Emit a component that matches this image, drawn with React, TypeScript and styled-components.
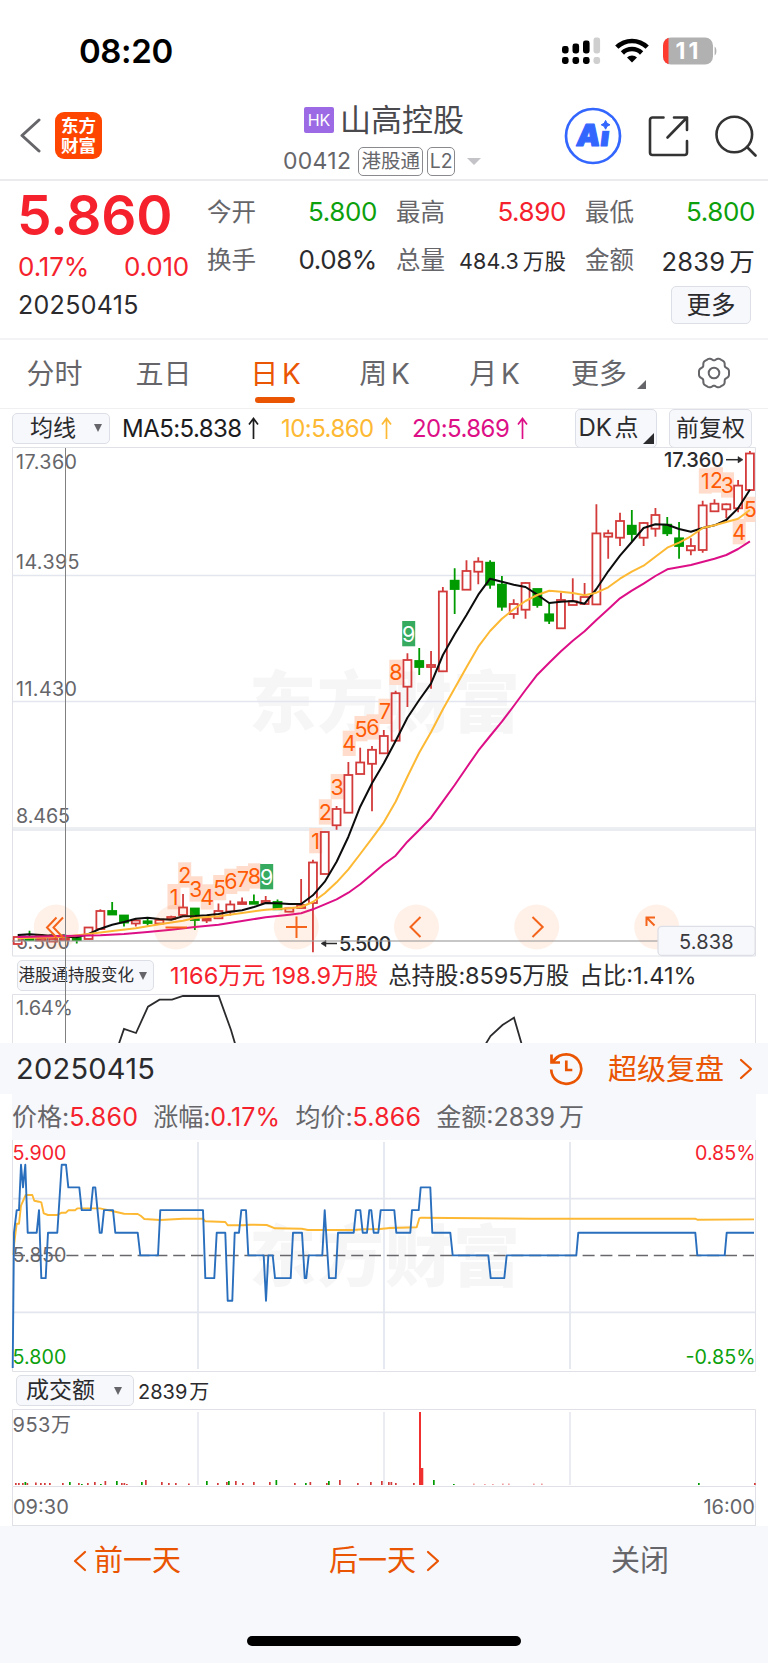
import React from 'react';
import styled, { createGlobalStyle } from 'styled-components';

const ORANGE = '#ea5504';
const RED = '#f5222d';
const GREEN = '#0ca00c';
const UP = '#d33a3a';
const DOWN = '#009b00';
const PANEL = '#f7f8fb';
const GRID = '#e3e6ee';
const FRAME = '#dfe1e6';

const GlobalStyle = createGlobalStyle`
  * { box-sizing: border-box; }
  body { margin: 0; background: #fff; }
  svg { display: block; flex: none; }
  svg text { font-family: Inter, "Noto Sans CJK SC", sans-serif; }
`;

const Screen = styled.div`
  width: 768px;
  height: 1663px;
  display: flex;
  flex-direction: column;
  overflow: hidden;
  background: #fff;
  color: #2b2b2e;
  font-family: Inter, "Noto Sans CJK SC", sans-serif;
  white-space: nowrap;
`;

const Text = styled.span<{ $size: number; $color?: string; $weight?: number; $track?: number; $lift?: number }>`
  font-size: ${p => p.$size}px;
  color: ${p => p.$color ?? 'inherit'};
  font-weight: ${p => p.$weight ?? 400};
  letter-spacing: ${p => p.$track ?? 0}px;
  padding-bottom: ${p => p.$lift ?? 0}px;
`;
const Unit = styled.span<{ $gap?: number }>`
  margin-left: ${p => p.$gap ?? 4}px;
`;

/* Status bar */
const StatusBar = styled.div`
  height: 98px;
  padding: 4px 50px 0 79px;
  display: flex;
  align-items: center;
  justify-content: space-between;
`;
const StatusIcons = styled.div`
  display: flex;
  align-items: center;
  gap: 14px;
`;

/* Title bar */
const TitleBar = styled.header`
  height: 83px;
  padding: 0 11px 0 20px;
  display: flex;
  align-items: flex-start;
  border-bottom: 2px solid #ebebed;
`;
const BackArea = styled.div`
  width: 263px;
  padding-top: 14px;
  display: flex;
  align-items: center;
  gap: 14px;
`;
const AppLogo = styled.div`
  width: 47px;
  height: 47px;
  border-radius: 9px;
  background: #ff4600;
  color: #fff;
  display: grid;
  align-content: center;
  justify-content: center;
  font-size: 17.5px;
  line-height: 20px;
  font-weight: 700;
`;
const TitleArea = styled.div`
  width: 281px;
  display: flex;
  flex-direction: column;
`;
const TitleLine = styled.div`
  display: flex;
  align-items: center;
  height: 38px;
  margin-top: 3px;
  padding-left: 21px;
  gap: 6px;
`;
const CodeLine = styled.div`
  display: flex;
  align-items: center;
  height: 30px;
  margin-top: 7px;
`;
const MarketBadge = styled.span`
  width: 30px;
  height: 26px;
  border-radius: 2px;
  background: #9b6ae4;
  color: #fff;
  font-size: 16px;
  line-height: 27px;
  text-align: center;
`;
const Outlined = styled.span<{ $w: number; $gap: number }>`
  width: ${p => p.$w}px;
  height: 29px;
  margin-left: ${p => p.$gap}px;
  border: 1.5px solid #8a8a8e;
  border-radius: 5px;
  color: #66666a;
  font-size: 19.5px;
  line-height: 26px;
  display: flex;
  justify-content: center;
`;
const Caret = styled.i<{ $w: number; $h: number; $color: string; $ml?: number }>`
  width: 0;
  height: 0;
  margin-left: ${p => p.$ml ?? 0}px;
  border-left: ${p => p.$w / 2}px solid transparent;
  border-right: ${p => p.$w / 2}px solid transparent;
  border-top: ${p => p.$h}px solid ${p => p.$color};
`;
const Corner = styled.i<{ $s: number; $color: string }>`
  width: 0;
  height: 0;
  border-left: ${p => p.$s}px solid transparent;
  border-bottom: ${p => p.$s}px solid ${p => p.$color};
`;
const Tools = styled.div`
  display: flex;
  align-items: center;
  gap: 26px;
  padding-top: 9px;
`;

/* Quote panel */
const Quote = styled.section`
  height: 159px;
  padding-left: 18px;
  border-bottom: 2px solid #f3f3f5;
`;
const QuoteTop = styled.div`
  height: 102px;
  display: flex;
`;
const PriceBlock = styled.div`
  width: 189px;
`;
const Price = styled.div`
  height: 68px;
  margin-left: -1px;
  line-height: 69px;
  color: ${RED};
  font-size: 55px;
  font-weight: 600;
  letter-spacing: -0.1px;
`;
const Change = styled.div`
  height: 34px;
  width: 171px;
  display: flex;
  align-items: center;
  justify-content: space-between;
`;
const Metrics = styled.div`
  display: grid;
  grid-template-columns: repeat(3, 170px);
  grid-template-rows: 47.5px 47.5px;
  column-gap: 19px;
  padding-top: 7px;
`;
const Metric = styled.div`
  display: flex;
  align-items: center;
  justify-content: space-between;
`;
const QuoteFoot = styled.div`
  height: 46px;
  display: flex;
  align-items: center;
  justify-content: space-between;
  padding: 0 17px 2px 0;
`;

const Chip = styled.button<{ $w: number; $h: number; $size: number; $gap?: number; $left?: number }>`
  width: ${p => p.$w}px;
  height: ${p => p.$h}px;
  flex: none;
  padding: 0 0 0 ${p => p.$left ?? 0}px;
  border: 1.5px solid #dddfe6;
  border-radius: 5px;
  background: ${PANEL};
  color: #2b2b2e;
  font-family: inherit;
  font-size: ${p => p.$size}px;
  line-height: 1;
  display: flex;
  align-items: center;
  justify-content: ${p => (p.$left ? 'flex-start' : 'center')};
  gap: ${p => p.$gap ?? 0}px;
  word-spacing: -4px;
`;

/* Period tabs */
const Tabs = styled.nav`
  height: 69px;
  display: flex;
  border-bottom: 1px solid #f0f0f2;
`;
const Tab = styled.div<{ $w: number; $active?: boolean }>`
  width: ${p => p.$w}px;
  display: flex;
  flex-direction: column;
  align-items: center;
  padding-top: 14px;
  color: ${p => (p.$active ? ORANGE : '#66666a')};
  font-size: 28px;
  line-height: 40px;
  word-spacing: -4px;
  &::after {
    content: '';
    width: 40px;
    height: 6px;
    margin: 3px 2px 0 0;
    border-radius: 3px;
    background: ${p => (p.$active ? ORANGE : 'transparent')};
  }
`;
const TabMore = styled.div`
  width: 118px;
  padding: 14px 0 0 18px;
  display: flex;
  align-items: flex-start;
  gap: 10px;
  color: #66666a;
  font-size: 28px;
  line-height: 40px;
  i { margin-top: 26px; }
`;
const GearBox = styled.div`
  padding: 16px 0 0 26px;
`;

/* Indicator legend */
const Legend = styled.div`
  height: 38px;
  padding: 0 16px 0 12px;
  display: flex;
  align-items: center;
`;
const LegendItem = styled.span<{ $color: string; $ml: number; $w: number }>`
  margin-left: ${p => p.$ml}px;
  width: ${p => p.$w}px;
  color: ${p => p.$color};
  font-size: 24px;
  letter-spacing: -0.55px;
  display: flex;
  align-items: center;
  justify-content: space-between;
`;
const Push = styled.div`
  margin-left: auto;
  display: flex;
  gap: 12px;
  i { margin: 20px 0 0 4px; }
`;

/* Chart blocks */
const ChartStack = styled.div`
  position: relative;
  height: 596px;
`;
const CrossLine = styled.div`
  position: absolute;
  left: 65px;
  top: 1px;
  bottom: 0;
  width: 1px;
  background: #808080;
`;
const HoldRow = styled.div`
  height: 37px;
  padding-left: 17px;
  display: flex;
  align-items: center;
`;
const HoldFigures = styled.div`
  display: flex;
  gap: 10px;
  padding: 0 0 3px 16px;
`;

/* Replay panel */
const ReplayHead = styled.div`
  height: 51px;
  background: ${PANEL};
  padding: 0 15px 0 16px;
  display: flex;
  align-items: center;
`;
const ReplayLink = styled.div`
  margin-left: auto;
  display: flex;
  align-items: center;
  gap: 15px;
  color: ${ORANGE};
`;
const Summary = styled.div`
  height: 46px;
  margin: 0 12px;
  padding-bottom: 4px;
  background: ${PANEL};
  display: flex;
  align-items: center;
  gap: 15px;
  color: #66666a;
  font-size: 25px;
  b { font-weight: 400; color: ${RED}; letter-spacing: 0.2px; }
`;
const VolumeHead = styled.div`
  height: 36px;
  padding: 0 0 1px 16px;
  display: flex;
  align-items: center;
  gap: 4px;
`;
const TimeAxis = styled.div`
  height: 39px;
  margin: 0 12px;
  padding-top: 2px;
  border: 1px solid ${FRAME};
  border-top: 0;
  display: flex;
  align-items: center;
  justify-content: space-between;
  color: #66666a;
`;

/* Footer */
const Footer = styled.footer`
  height: 137px;
  background: ${PANEL};
  display: flex;
  flex-direction: column;
  align-items: center;
`;
const DayNav = styled.div`
  width: 100%;
  height: 110px;
  padding: 15px 0 0 73px;
  display: flex;
  align-items: flex-start;
  color: ${ORANGE};
  font-size: 29px;
  line-height: 40px;
`;
const NavItem = styled.div<{ $w: number; $gap: number; $color?: string }>`
  width: ${p => p.$w}px;
  display: flex;
  align-items: center;
  gap: ${p => p.$gap}px;
  color: ${p => p.$color ?? 'inherit'};
`;
const HomeBar = styled.div`
  width: 274px;
  height: 10px;
  border-radius: 5px;
  background: #000;
`;

/* high, body top, body bottom, low, 1 when the day closed up */
const candles: [number, number, number, number, 0 | 1][] = [
  [936.7, 937, 944, 944, 1], [930.7, 937.5, 940, 941, 0], [938, 938.5, 940.5, 941, 1], [938.5, 939, 941.5, 942, 1],
  [938, 938, 940, 940, 1], [937, 938, 940, 943.5, 0], [927, 927.5, 939, 939, 1], [909.3, 911, 929, 929, 1],
  [902, 911, 914.5, 915, 0], [915, 915.5, 922.5, 926.5, 0], [918.5, 920.5, 923.5, 926.5, 1], [918, 921.3, 923, 925.5, 0],
  [919.7, 920, 923.5, 923.5, 1], [915.7, 917, 919, 919, 1], [894, 907.5, 915, 915, 1], [908.5, 908.5, 920, 930, 0],
  [917, 918.7, 920.5, 923, 1], [903.5, 911, 918.3, 918.5, 1], [900.5, 904.5, 911.5, 915.5, 1], [897.5, 902.3, 904, 904, 1],
  [894.5, 902, 903.8, 904, 0], [896, 901, 903, 903, 1], [899.5, 902, 909.3, 910, 0], [907.8, 908.3, 911.7, 912, 1],
  [879, 905, 908, 908, 1], [859.7, 862.5, 903, 952.3, 1], [831.5, 832, 874, 874, 1], [806, 809, 825.3, 829.7, 1],
  [762, 775, 812.7, 813, 1], [747.7, 762.5, 774, 774, 1], [746, 749.8, 763.8, 811.3, 1], [730, 736, 753.3, 753.5, 1],
  [690.7, 693.2, 740.7, 741, 1], [653.3, 660, 686.7, 707, 1], [648, 661, 667, 675, 0], [651, 665, 667, 688.7, 1],
  [587, 591.5, 671.3, 671.5, 1], [568.3, 580.7, 589, 614, 0], [560.3, 571, 589.7, 590, 1], [557.3, 561.7, 571.7, 584.3, 1],
  [560.3, 562.7, 584.7, 588.7, 0], [576, 584.7, 606.7, 610.7, 0], [599.3, 604, 614, 618.7, 1], [582, 583, 609.7, 618.7, 1],
  [589, 589, 605, 607.7, 0], [602.3, 614.3, 620.7, 624, 0], [592.7, 600, 628.3, 628.5, 1], [578.3, 601.3, 605, 605, 1],
  [583, 597, 604, 604, 1], [504.3, 533.4, 604.4, 604.5, 1], [529.7, 533.3, 536.7, 558.7, 1], [512.7, 521, 537.7, 546, 1],
  [510, 525.7, 534, 541.3, 0], [522, 523, 537.7, 546, 1], [508, 515, 528.7, 536.7, 1], [517, 524.7, 533.3, 536, 0],
  [522, 538.3, 546, 558.7, 0], [538.3, 546, 550.3, 555.3, 1], [500.7, 505.4, 550, 552.7, 1], [499.3, 503.7, 511.3, 511.5, 1],
  [503.5, 504.3, 509.3, 518.3, 1], [480, 485.6, 508.3, 512.3, 1], [451, 453.5, 490, 490, 1],
];

const ma5 = [
  935, 934.3, 935, 936, 936.7, 937.3, 934, 928.7, 924.7, 922, 918.7, 917.7, 919, 919.7, 916.3, 916, 915.3, 914, 911.7,
  910.3, 907, 903, 903.3, 904, 904, 895.3, 881.7, 861.7, 836.7, 806.7, 783.3, 763.3, 741, 717.7, 700, 683.3, 655, 634.3,
  615, 594.7, 578.7, 581.7, 584.7, 587, 594.7, 603, 601.7, 601, 603.7, 589, 571.3, 555.7, 542, 528, 524.3, 524.7, 529,
  531.7, 528, 525.3, 520, 508.3, 489.7,
].map((y, i) => [i, y]);

const ma10 = [
  [0, 938.3], [4, 936.7], [6, 934], [8, 931], [10, 928.3], [12, 924.3], [14, 920.7], [15, 918], [17, 916.3], [19, 913],
  [21, 909.7], [23, 908.3], [24, 907], [25, 902], [26, 893.3], [27, 882.3], [28, 869.3], [29, 854], [30, 838.3],
  [31, 822.3], [32, 801.7], [33, 776.7], [34, 752.7], [35, 732], [36, 709.3], [37, 688.3], [38, 667.3], [39, 646.7],
  [40, 631], [41, 618.7], [42, 609.3], [43, 601], [44, 595], [45, 590.7], [46, 591.7], [47, 593], [48, 595.3],
  [49, 592.7], [50, 587.3], [51, 578.7], [52, 571.7], [53, 565.7], [54, 556.7], [55, 547.7], [56, 542.7], [57, 536.3],
  [58, 528], [59, 525.3], [60, 522], [61, 518.7], [62, 510],
];

const ma20 = [
  [0, 937], [4, 936], [7, 935.3], [9, 934], [11, 932], [13, 929.7], [15, 927], [17, 924.7], [19, 921], [21, 917.3],
  [23, 914.7], [24, 913.3], [25, 909.3], [26, 904.3], [27, 899.3], [28, 892.7], [29, 884.3], [30, 874.3], [31, 864.3],
  [32, 855.7], [33, 841.7], [34, 830], [35, 817.7], [36, 801.3], [37, 785], [38, 767.7], [39, 750.7], [40, 736],
  [41, 721.7], [42, 706], [43, 690], [44, 674.7], [45, 662.7], [46, 651.3], [47, 640.7], [48, 631.3], [49, 620],
  [50, 609.3], [51, 598.3], [52, 590.7], [53, 583.7], [54, 576], [55, 569.3], [57, 565], [59, 558.7], [60, 555],
  [61, 549], [62, 541.3],
];

/* countdown marks: digit, centre x, top y */
const marks: [number, number, number][] = [
  [1, 174, 884], [2, 184.7, 862.3], [3, 196, 876.3], [4, 207.2, 884.3], [5, 219.7, 875], [6, 230.8, 868.7],
  [7, 243, 866], [8, 254.5, 863.3], [9, 266.7, 864], [1, 315.7, 828], [2, 325.3, 799.3], [3, 337.2, 774],
  [4, 349.2, 730.7], [5, 361, 716], [6, 373, 714.3], [7, 385, 698.7], [8, 395.8, 659.7], [9, 408.7, 621],
  [1, 705.3, 468.3], [2, 716.5, 467.3], [3, 727.5, 472.3], [4, 739.2, 519], [5, 750.3, 496.7],
];

const cx = (i: number) => 17.7 + i * 11.81;
const line = (pts: number[][]) => pts.map(([i, y]) => `${cx(i).toFixed(1)},${y}`).join(' ');

/* time slot (three per pixel) and traded price in cents */
const ticks: [number, number][] = [
  [38, 580], [42, 586], [50, 587], [57, 587], [63, 589], [69, 588], [76, 589], [83, 586], [110, 586], [117, 587],
  [124, 584], [137, 584], [144, 586], [172, 586], [185, 589], [198, 589], [205, 588], [238, 588], [245, 587],
  [272, 587], [279, 588], [286, 588], [299, 586], [305, 586], [312, 587], [339, 587], [346, 586], [413, 586],
  [421, 585], [474, 585], [481, 587], [609, 587], [616, 584], [643, 584], [650, 586], [676, 586], [683, 583],
  [697, 583], [704, 586], [717, 586], [724, 587], [738, 587], [745, 585], [791, 585], [798, 583], [805, 585],
  [818, 585], [825, 584], [872, 584], [879, 586], [906, 586], [914, 584], [919, 584], [926, 585], [967, 585],
  [974, 587], [987, 584], [1007, 584], [1014, 586], [1061, 586], [1068, 587], [1081, 587], [1088, 586], [1101, 586],
  [1108, 587], [1114, 587], [1121, 586], [1135, 586], [1142, 587], [1183, 587], [1189, 586], [1231, 586],
  [1236, 587], [1256, 587], [1262, 588], [1291, 588], [1297, 586], [1351, 586], [1358, 585], [1465, 585],
  [1472, 584], [1513, 584], [1520, 585], [1729, 585], [1735, 586], [2086, 586], [2092, 585], [2174, 585],
  [2180, 586], [2262, 586],
];
const priceLine = ticks
  .map(([t, p]) => `${(t / 3).toFixed(1)},${p === 580 ? 1368 : (1255.4 - (p - 585) * 22.67).toFixed(1)}`)
  .join(' ');

const average: [number, number][] = [
  [13.5, 1255], [14, 1246], [15.5, 1233], [16.7, 1223.7], [19, 1223.7], [21, 1205.7], [25.7, 1195], [32.3, 1195],
  [34.3, 1200.7], [39, 1201.7], [41.3, 1202.3], [43.7, 1213.3], [48, 1215], [57.3, 1215], [61.7, 1212.7], [66, 1212.7],
  [68.3, 1210.3], [75, 1210.3], [77.3, 1208.4], [100, 1208.4], [108.3, 1210.3], [115.3, 1211.7], [124, 1213.7],
  [137.7, 1214], [141, 1216], [144.3, 1219], [160, 1220], [183, 1218.7], [203, 1218.7], [205.3, 1221.3],
  [225.3, 1222], [227.7, 1225.3], [243, 1225.3], [250, 1224.7], [266.7, 1225], [275, 1228.3], [301.7, 1228.7],
  [308, 1230], [353, 1230], [363, 1229.3], [380, 1229], [390, 1228], [416.7, 1227.3], [419.3, 1218.4], [421, 1217.7],
  [450, 1218], [533, 1218.7], [695, 1218.7], [697.3, 1219.7], [754, 1219.4],
];

/* small turnover bars: x, height, colour */
const volumes: [number, number, string][] = [
  [15, 2, UP], [18, 2, UP], [22, 2, UP], [24.5, 3, DOWN], [26.5, 2, UP], [35, 2.5, UP], [40, 2, UP], [44, 2, UP],
  [49, 2, UP], [62, 2, UP], [69, 3, DOWN], [78, 2, UP], [81, 1, DOWN], [87, 2, UP], [94, 3, UP], [100, 1, DOWN],
  [104.5, 4, UP], [116, 4, DOWN], [121, 2, UP], [123.5, 2, UP], [126, 1, UP], [141, 3, DOWN], [145, 5, UP],
  [161, 3, UP], [168, 2, UP], [175, 2, UP], [188, 1.5, UP], [206, 4, DOWN], [217, 2, UP], [226, 3, UP], [228, 4, DOWN],
  [235, 4, UP], [242, 2, UP], [253, 3, UP], [269, 3, UP], [275.5, 5, DOWN], [294, 2, UP], [305, 2, DOWN], [309.5, 3, UP],
  [326, 2, UP], [328, 4, DOWN], [339, 5, UP], [357, 2, UP], [370, 3, UP], [381, 4, UP], [388, 3, UP], [390.5, 3, UP],
  [395, 2, UP], [413, 2, UP], [433, 5, DOWN], [453, 1, DOWN], [473, 1.5, '#f0a0a0'], [484, 1, '#f0a0a0'],
  [492, 1, '#f0a0a0'], [502, 1.5, '#f0a0a0'], [508, 1.5, '#f0a0a0'], [533, 1.5, '#f0a0a0'], [541, 1.5, '#f0a0a0'],
  [698, 2, DOWN], [754, 2, UP],
];

/* six broad lobes with narrow notches between them */
const gearPath =
  Array.from({ length: 120 }, (_, k) => {
    const a = (k * Math.PI) / 60;
    const r = 14.3 + 1.15 * Math.cos(6 * a) - 0.45 * Math.cos(12 * a);
    return `${k ? 'L' : 'M'}${(17 + r * Math.cos(a)).toFixed(2)} ${(17 + r * Math.sin(a)).toFixed(2)}`;
  }).join('') + 'Z';

const SignalIcon = () => (
  <svg width="39" height="28" viewBox="0 0 39 28">
    {[0, 1, 2, 3].map(i => (
      <g key={i} fill={i === 3 ? '#cfcfcf' : '#000'}>
        <rect x={i * 10.5} y={[9, 6.5, 3.5, 0.5][i]} width="6.6" height={[7.5, 10, 13, 16][i]} rx="2.4" />
        <rect x={i * 10.5} y="20" width="6.6" height="7" rx="2.4" />
      </g>
    ))}
  </svg>
);

const WifiIcon = () => (
  <svg width="34" height="26" viewBox="0 0 34 26" fill="none" stroke="#000" strokeWidth="4.6">
    <path d="M1.8 9.2a21.6 21.6 0 0 1 30.4 0" />
    <path d="M7.4 15a13.6 13.6 0 0 1 19.2 0" />
    <path d="M17 24.6l-5-5a7 7 0 0 1 10 0z" fill="#000" stroke="none" />
  </svg>
);

const BatteryIcon = () => (
  <svg width="55" height="28" viewBox="0 0 55 28">
    <defs>
      <clipPath id="cell"><rect x="0" y="0.5" width="50" height="27" rx="8" /></clipPath>
    </defs>
    <g clipPath="url(#cell)">
      <rect width="50" height="28" fill="#b1b1b1" />
      <rect width="5.5" height="28" fill="#ff3b30" />
    </g>
    <path d="M51.6 9.5c2.4 1 2.4 8 0 9z" fill="#b1b1b1" />
    <text x="24" y="22.3" fontSize="23" fontWeight="700" fill="#fff" textAnchor="middle" textLength="23">11</text>
  </svg>
);

const AiIcon = () => (
  <svg width="58" height="58" viewBox="0 0 58 58">
    <circle cx="29" cy="29" r="27" fill="none" stroke="#3366ff" strokeWidth="2.7" />
    <text transform="translate(11.5 39) skewX(-7)" fontSize="30" fontWeight="900" fill="#3366ff" stroke="#3366ff" strokeWidth="1.2" strokeLinejoin="round" textLength="33">Ai</text>
    <rect x="34" y="11" width="14" height="12.8" fill="#fff" />
    <path d="M41.6 13.4l1.5 2.9 2.9 1.5-2.9 1.5-1.5 2.9-1.5-2.9-2.9-1.5 2.9-1.5z" fill="#3366ff" stroke="#3366ff" />
  </svg>
);

const ShareIcon = () => (
  <svg width="41" height="42" viewBox="0 0 41 42" fill="none" stroke="#333" strokeWidth="2.6" strokeLinecap="round" strokeLinejoin="round">
    <path d="M15.5 2.5H4.5A2.5 2.5 0 0 0 2 5v32.5A2.5 2.5 0 0 0 4.5 40h32a2.5 2.5 0 0 0 2.5-2.5V26" />
    <path d="M26 2.5h13V15M39 2.5L19.500 22.500" />
  </svg>
);

const SearchIcon = () => (
  <svg width="42" height="42" viewBox="0 0 42 42" fill="none" stroke="#333" strokeWidth="2.6" strokeLinecap="round">
    <circle cx="19.3" cy="19.5" r="17.8" />
    <path d="M32 32l8.5 8.5" />
  </svg>
);

const HistoryIcon = () => (
  <svg width="34" height="34" viewBox="0 0 34 34" fill="none" stroke={ORANGE} strokeWidth="2.7">
    <path d="M2.2 17.5A15 14.7 0 1 0 5.2 8.3" />
    <path d="M2.5 2.5v8H11M3 10l6-5.5" />
    <path d="M17.3 8.500V18h6" />
  </svg>
);

type ChevronProps = { w: number; h: number; left?: boolean; sw?: number; color?: string };
const Chevron = ({ w, h, left, sw = 2.2, color = ORANGE }: ChevronProps) => (
  <svg width={w} height={h} viewBox={`0 0 ${w} ${h}`} fill="none" stroke={color} strokeWidth={sw} strokeLinecap="round" strokeLinejoin="round">
    <polyline points={left ? `${w - 2},2 2,${h / 2} ${w - 2},${h - 2}` : `2,2 ${w - 2},${h / 2} 2,${h - 2}`} />
  </svg>
);

const UpArrow = () => (
  <svg width="11" height="23" viewBox="0 0 11 23" fill="none" stroke="currentColor" strokeWidth="1.7">
    <path d="M5.5 22V1.500M1 7.500L5.500 1.500 10 7.500" />
  </svg>
);

const Watermark = ({ y }: { y: number }) => (
  <text x="249" y={y} fontSize="67" fontWeight="900" fill="#f6f6f7" textLength="271">
    东方财富
  </text>
);

const KLineChart = () => (
  <svg width="768" height="510" viewBox="0 447 768 510">
    <Watermark y={727} />
    <g stroke={GRID} strokeWidth="1.5">
      <path d="M12 575.500H755M12 701.500H755" />
      <path d="M12 828H755" stroke="#eceff2" strokeWidth="2" />
      <path d="M12 830H755" />
    </g>
    <path d="M12.500 956V447.500H755.500V956Z" fill="none" stroke={FRAME} />
    <g fill="#66666a" fontSize="19.7">
      <text x="16" y="469" textLength="61">17.360</text>
      <text x="16" y="568.5" textLength="63.5">14.395</text>
      <text x="16" y="695.5" textLength="61">11.430</text>
      <text x="16" y="822.5" textLength="54">8.465</text>
      <text x="16" y="948.5" textLength="54">5.500</text>
    </g>
    {marks.map(([n, x, y], k) => (
      <g key={k}>
        <rect x={x - 6.5} y={y} width={k === 22 ? 11.5 : 13} height="25.3" fill={n === 9 ? '#36ab60' : '#ffdccb'} />
        <text x={x} y={y + 20.5} fontSize="21.5" textAnchor="middle" fill={n === 9 ? '#fff' : '#ff5a05'}>{n}</text>
      </g>
    ))}
    {candles.map(([hi, top, bottom, lo, up], i) => (
      <g key={i} stroke={up ? UP : DOWN} strokeWidth="1.8" fill={up ? 'none' : DOWN}>
        <path d={`M${cx(i)} ${hi}V${top}M${cx(i)} ${bottom}V${lo}`} />
        <rect x={cx(i) - 4} y={top} width="8" height={bottom - top} />
      </g>
    ))}
    <g fill="none" strokeWidth="2" strokeLinejoin="round">
      <polyline points={line(ma5)} stroke="#0c0c0c" />
      <polyline points={line(ma10)} stroke="#fdb933" />
      <polyline points={line(ma20)} stroke="#dd0f87" />
    </g>
    <g fontSize="20" fontWeight="500" fill="#2b2b2e">
      <text x="664" y="467" textLength="60">17.360</text>
      <text x="339" y="951" textLength="52.5">5.500</text>
    </g>
    <g stroke="#2b2b2e" strokeWidth="1.5" fill="#2b2b2e">
      <path d="M726 459.700H739" />
      <path d="M738 456.500l5 3.200-5 3.200z" strokeWidth="0.5" />
      <path d="M337 943.500H325" />
      <path d="M326 940.300l-5 3.200 5 3.200z" strokeWidth="0.5" />
    </g>
    {[56.3, 176, 296.3, 416.5, 536.7, 656.7].map(x => (
      <circle key={x} cx={x} cy="927" r="22.5" fill="#ff6a1f" fillOpacity="0.1" />
    ))}
    <g fill="none" stroke="#f4641a" strokeWidth="2">
      <path d="M56.500 917.500L47 927.500L56.500 937.500M63 917.500L53.500 927.500L63 937.500" />
      <path d="M165.500 927.500H187" />
      <path d="M286 927H307M296.500 916.500V938" />
      <path d="M420.500 917L410.500 927L420.500 937" />
      <path d="M532.500 917L542.700 927L532.500 937" />
      <path d="M646.500 926V917.500H655M647 918L654.500 925.500" />
    </g>
    <path d="M12 941H658" stroke="#999" strokeOpacity="0.55" strokeWidth="1.8" />
    <rect x="658" y="926.3" width="97.2" height="29.2" rx="4" fill={PANEL} stroke="#dddfe6" strokeWidth="1.3" />
    <text x="679" y="948.5" fontSize="20" fill="#3a3a3e" textLength="54.5">5.838</text>
  </svg>
);

const HoldingChart = () => (
  <svg width="768" height="49" viewBox="0 994 768 49">
    <path d="M12.500 1043V994.500H755.500V1043" fill="none" stroke={FRAME} />
    <text x="16" y="1014.5" fontSize="20" fill="#66666a" textLength="57">1.64%</text>
    <g fill="none" stroke="#2b2b2e" strokeWidth="1.8">
      <polyline points="119,1043.500 124,1029 136,1033 148,1006.700 159.500,999.700 172,999.700 183,996 218.700,996 231,1030 235,1043.500" />
      <polyline points="486,1043.500 490.500,1036 502.500,1025 514,1017.700 521.500,1043.500" />
    </g>
  </svg>
);

const IntradayChart = () => (
  <svg width="768" height="233" viewBox="0 1140 768 233">
    <Watermark y={1281} />
    <path d="M12.500 1140V1371.500H755.500V1140" fill="none" stroke={FRAME} />
    <path d="M198 1142V1369M384 1142V1369M570 1142V1369M12 1198.700H755M12 1312.300H755" stroke={GRID} strokeWidth="1.7" />
    <path d="M13 1255.500H754" stroke="#68686c" strokeWidth="1.3" strokeDasharray="12 5.8" />
    <g fontSize="19.7">
      <text x="12.5" y="1159.5" fill={RED} textLength="54">5.900</text>
      <text x="12.5" y="1261.5" fill="#66666a" textLength="54">5.850</text>
      <text x="12.5" y="1363.8" fill={GREEN} textLength="54">5.800</text>
      <text x="695" y="1159.5" fill={RED} textLength="60.5">0.85%</text>
      <text x="685.5" y="1363.8" fill={GREEN} textLength="70">-0.85%</text>
    </g>
    <g fill="none" strokeWidth="1.9" strokeLinejoin="round">
      <polyline points={average.map(p => p.join()).join(' ')} stroke="#fdb933" />
      <polyline points={priceLine} stroke="#2a6fbd" />
    </g>
  </svg>
);

const TurnoverChart = () => (
  <svg width="768" height="78" viewBox="0 1409 768 78">
    <path d="M12.500 1486.500V1409.500H755.500V1486.500Z" fill="none" stroke={FRAME} />
    <path d="M198 1412V1485M384 1412V1485M570 1412V1485" stroke={GRID} strokeWidth="1.5" />
    <text x="12.5" y="1431.5" fontSize="20" fill="#66666a" textLength="58.5">953万</text>
    {volumes.map(([x, h, color]) => (
      <rect key={x} x={x} y={1485 - h} width="1.7" height={h} fill={color} />
    ))}
    <path d="M419 1412h2v56h2.300v17h-4.300z" fill="#f0302f" />
  </svg>
);

type MetricData = { label: string; value: string; unit?: string; color?: string; size?: number; track?: number };
const metrics: MetricData[] = [
  { label: '今开', value: '5.800', color: GREEN },
  { label: '最高', value: '5.890', color: RED },
  { label: '最低', value: '5.800', color: GREEN },
  { label: '换手', value: '0.08%' },
  { label: '总量', value: '484.3', unit: '万股', size: 21.5, track: 0.1 },
  { label: '金额', value: '2839', unit: '万', size: 25.5, track: 0.2 },
];

export default function App() {
  return (
    <Screen>
      <GlobalStyle />
      <StatusBar>
        <Text $size={33} $weight={600} $color="#000" $track={-0.4} $lift={1}>08:20</Text>
        <StatusIcons>
          <SignalIcon />
          <WifiIcon />
          <BatteryIcon />
        </StatusIcons>
      </StatusBar>

      <TitleBar>
        <BackArea>
          <Chevron w={21} h={35} left sw={3} color="#66666a" />
          <AppLogo>
            <span>东方</span>
            <span>财富</span>
          </AppLogo>
        </BackArea>
        <TitleArea>
          <TitleLine>
            <MarketBadge>HK</MarketBadge>
            <Text $size={31} $color="#4a4a4e" $lift={6}>山高控股</Text>
          </TitleLine>
          <CodeLine>
            <Text $size={23} $color="#66666a" $track={0.3}>00412</Text>
            <Outlined $w={65} $gap={7}>港股通</Outlined>
            <Outlined $w={28} $gap={4}>L2</Outlined>
            <Caret $w={14} $h={7} $color="#c4c4c8" $ml={12} />
          </CodeLine>
        </TitleArea>
        <Tools>
          <AiIcon />
          <ShareIcon />
          <SearchIcon />
        </Tools>
      </TitleBar>

      <Quote>
        <QuoteTop>
          <PriceBlock>
            <Price>5.860</Price>
            <Change>
              <Text $size={26} $color={RED} $track={-0.1}>0.17%</Text>
              <Text $size={26} $color={RED} $track={-0.2}>0.010</Text>
            </Change>
          </PriceBlock>
          <Metrics>
            {metrics.map(m => (
              <Metric key={m.label}>
                <Text $size={24.5} $color="#66666a" $lift={2}>{m.label}</Text>
                <Text $size={m.size ?? 26} $color={m.color} $track={m.track ?? -0.4}>
                  {m.value}
                  {m.unit && <Unit>{m.unit}</Unit>}
                </Text>
              </Metric>
            ))}
          </Metrics>
        </QuoteTop>
        <QuoteFoot>
          <Text $size={25} $track={0.3}>20250415</Text>
          <Chip $w={80} $h={38} $size={24.5}>更多</Chip>
        </QuoteFoot>
      </Quote>

      <Tabs>
        <Tab $w={109}>分时</Tab>
        <Tab $w={109}>五日</Tab>
        <Tab $w={115} $active>日 K</Tab>
        <Tab $w={103}>周 K</Tab>
        <Tab $w={117}>月 K</Tab>
        <TabMore>更多<Corner $s={9} $color="#66666a" /></TabMore>
        <GearBox>
          <svg width="34" height="34" viewBox="0 0 34 34" fill="none" stroke="#66666a" strokeWidth="2">
            <path d={gearPath} />
            <circle cx="17" cy="17" r="5.3" />
          </svg>
        </GearBox>
      </Tabs>

      <Legend>
        <Chip $w={98} $h={31} $size={23} $gap={18} $left={17}>
          均线<Caret $w={9} $h={8} $color="#66666a" />
        </Chip>
        <LegendItem $color="#1c1c1e" $ml={12} $w={137}>MA5:5.838<UpArrow /></LegendItem>
        <LegendItem $color="#fdb933" $ml={22} $w={111}>10:5.860<UpArrow /></LegendItem>
        <LegendItem $color="#dd0f87" $ml={20} $w={116}>20:5.869<UpArrow /></LegendItem>
        <Push>
          <Chip $w={82} $h={39} $size={24}>
            DK 点<Corner $s={11} $color="#2b2b2e" />
          </Chip>
          <Chip $w={83} $h={39} $size={23}>前复权</Chip>
        </Push>
      </Legend>

      <ChartStack>
        <KLineChart />
        <HoldRow>
          <Chip $w={137} $h={31} $size={16.5} $gap={5} $left={0.5}>
            港股通持股变化<Caret $w={9} $h={8} $color="#66666a" />
          </Chip>
          <HoldFigures>
            <Text $size={23.5} $color={RED} $track={0}>1166万元 198.9万股</Text>
            <Text $size={23.5} $track={-0.1}>总持股:8595万股</Text>
            <Text $size={23.5} $track={0}>占比:1.41%</Text>
          </HoldFigures>
        </HoldRow>
        <HoldingChart />
        <CrossLine />
      </ChartStack>

      <ReplayHead>
        <Text $size={29} $track={0.25}>20250415</Text>
        <ReplayLink>
          <HistoryIcon />
          <Text $size={29} $lift={4} style={{ marginLeft: 10 }}>超级复盘</Text>
          <Chevron w={14} h={22} />
        </ReplayLink>
      </ReplayHead>
      <Summary>
        <span>价格:<b>5.860</b></span>
        <span>涨幅:<b>0.17%</b></span>
        <span>均价:<b>5.866</b></span>
        <span>金额:2839<Unit>万</Unit></span>
      </Summary>
      <IntradayChart />
      <VolumeHead>
        <Chip $w={118} $h={31} $size={23} $gap={19} $left={9}>
          成交额<Caret $w={9} $h={8} $color="#66666a" />
        </Chip>
        <Text $size={20}>2839<Unit $gap={2}>万</Unit></Text>
      </VolumeHead>
      <TurnoverChart />
      <TimeAxis>
        <Text $size={20}>09:30</Text>
        <Text $size={20}>16:00</Text>
      </TimeAxis>

      <Footer>
        <DayNav>
          <NavItem $w={256} $gap={7}><Chevron w={14} h={22} left />前一天</NavItem>
          <NavItem $w={282} $gap={10}>后一天<Chevron w={14} h={22} /></NavItem>
          <NavItem $w={60} $gap={0} $color="#66666a">关闭</NavItem>
        </DayNav>
        <HomeBar />
      </Footer>
    </Screen>
  );
}
